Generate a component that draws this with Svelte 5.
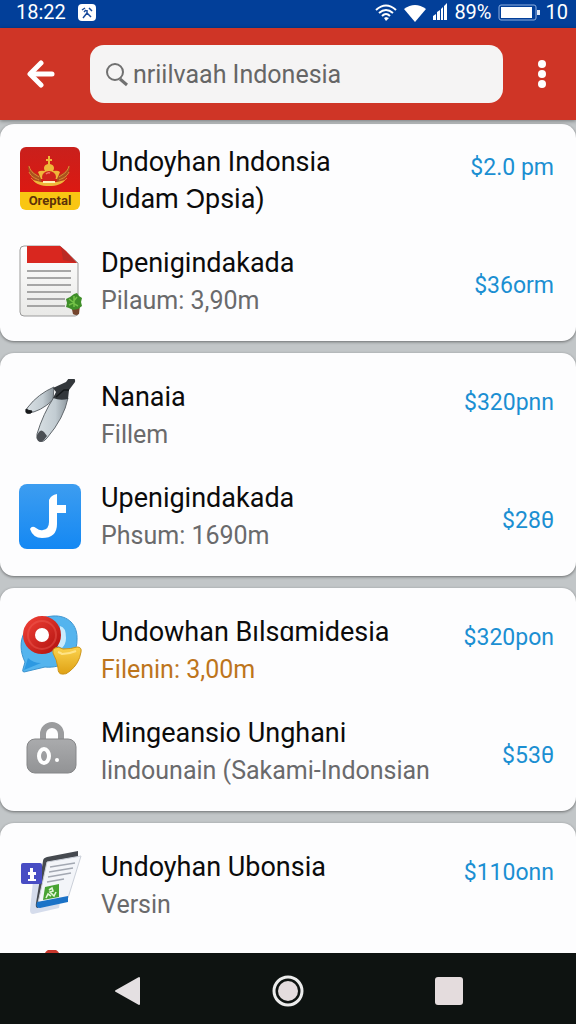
<script lang="ts">
  interface Item {
    icon: string;
    title?: string;
    sub?: string;
    tone?: string;
    price?: string;
  }

  let query = $state('nriilvaah Indonesia');

  const groups: Item[][] = [
    [
      { icon: 'crest', title: 'Undoyhan Indonsia', sub: 'Uıdam Ɔpsia)', tone: 'strong', price: '$2.0 pm' },
      { icon: 'note', title: 'Dpenigindakada', sub: 'Pilaum: 3,90m', price: '$36orm' }
    ],
    [
      { icon: 'compass', title: 'Nanaia', sub: 'Fillem', price: '$320pnn' },
      { icon: 'hook', title: 'Upenigindakada', sub: 'Phsum: 1690m', price: '$28θ' }
    ],
    [
      { icon: 'chat', title: 'Undowhan Bılsɑmidesia', sub: 'Filenin: 3,00m', tone: 'warm', price: '$320pon' },
      { icon: 'lock', title: 'Mingeansio Unghani', sub: 'lindounain (Sakami-Indonsian', price: '$53θ' }
    ],
    [
      { icon: 'papers', title: 'Undoyhan Ubonsia', sub: 'Versin', price: '$110onn' },
      { icon: 'dot' }
    ]
  ];
</script>

{#snippet picture(name: string)}
  <svg class="icon" viewBox="0 0 64 74" aria-hidden="true">
    {#if name === 'crest'}
      <defs>
        <clipPath id="crest-clip"><rect x="2" y="3" width="60" height="63" rx="6" /></clipPath>
        <linearGradient id="crest-red" x2="0" y2="1">
          <stop offset="0" stop-color="#c9201c" />
          <stop offset="1" stop-color="#dc1912" />
        </linearGradient>
      </defs>
      <g clip-path="url(#crest-clip)">
        <rect x="2" y="3" width="60" height="46" fill="url(#crest-red)" />
        <rect x="2" y="48" width="60" height="18" fill="#f9c613" />
      </g>
      <path d="M10 21c2 6 8 9 12 11l2 7c-7 0-14-8-14-18zM52 21c-2 6-8 9-12 11l-2 7c7 0 14-8 14-18z" fill="#a8531f" />
      <path d="M11 22c2 7 6 8 10 11M11 28c2 5 6 6 10 8M13 34q3 4 8 5M51 22c-2 7-6 8-10 11M51 28c-2 5-6 6-10 8M49 34q-3 4-8 5" fill="none" stroke="#e08a35" />
      <path d="M30 12h2v3h2v2h-2v3c4 1 5 4 3 7q5-1 7 1l-3 7H23l-3-7q2-2 7-1c-2-3-1-6 3-7v-3h-2v-2h2z" fill="#efb83a" />
      <ellipse cx="31" cy="33" rx="7" ry="6" fill="#cf241c" />
      <path d="M28 30q2-2 4-1" stroke="#f27a6c" stroke-width="1.5" fill="none" />
      <path d="M15 36c3 4 8 6 16 6s13-2 16-6l-8 2H23z" fill="#efb83a" />
      <path d="M25 38h12" stroke="#fff0b8" stroke-width="2" />
      <text class="crest-name" x="32" y="61" text-anchor="middle">Oreptal</text>
    {:else if name === 'note'}
      <defs>
        <linearGradient id="note-page" x2="0" y2="1">
          <stop offset="0" stop-color="#fff" />
          <stop offset="1" stop-color="#e9e9e7" />
        </linearGradient>
      </defs>
      <path d="M6 1h36l18 17v50a3 3 0 0 1-3 3H6a4 4 0 0 1-4-4V5a4 4 0 0 1 4-4z" fill="url(#note-page)" stroke="#9b9b9b" />
      <path d="M9 1h33l6 5 11 12H9z" fill="#d9271f" />
      <path d="M43 2l16 16-14-3z" fill="#b92b25" />
      <path d="M9 26h44M9 33h44M9 40h44M9 47h44M9 54h38M9 61h38" stroke="#8d8d8d" stroke-width="1.4" />
      <path d="M53 60h9l-1 9q-3 2-6 0z" fill="#75452d" />
      <path d="M56 49l3-1 2 3 3 2-1 4 1 4-4 3-5 1-4-2-3-1 1-4-1-4 4-2z" fill="#3f8e29" />
      <path d="M51 54l4 3 4-5M51 60l4-2 5 3M56 51v11" stroke="#74c248" stroke-width="1.5" fill="none" />
    {:else if name === 'compass'}
      <defs>
        <linearGradient id="leg" x2="1" y2="0">
          <stop offset="0" stop-color="#d9e0e4" />
          <stop offset=".6" stop-color="#c2ccd2" />
          <stop offset="1" stop-color="#8d979e" />
        </linearGradient>
      </defs>
      <path d="M36 8Q20 15 10 28q-4 5 0 6 12-1 25-13z" fill="url(#leg)" stroke="#62686d" />
      <path d="M8 30q3 2 6 2l-1 2q-5 1-5-1z" fill="#17191b" stroke="#17191b" />
      <path d="M36 18l14 1q-4 20-21 40-4 5-8 3-3-2-2-7 6-20 17-37z" fill="url(#leg)" stroke="#62686d" />
      <path d="M21 53q2-3 5 0l3 4-3 4q-3 3-6 1-2-3-1-6z" fill="#4b4f54" />
      <path d="M35 9l13-6 3-4q7-1 6 4l-6 8-1 9q-8 2-15-1l3-6z" fill="#33373b" />
      <path d="M38 18l8-7h5" stroke="#15181a" stroke-width="1.4" fill="none" />
    {:else if name === 'hook'}
      <defs>
        <linearGradient id="hook-blue" x2="0" y2="1">
          <stop offset="0" stop-color="#3d9df0" />
          <stop offset="1" stop-color="#1488f3" />
        </linearGradient>
      </defs>
      <rect x="1" y="4" width="62" height="65" rx="8" fill="url(#hook-blue)" />
      <path d="M31 20q2-5 8-6v11h9v8h-9v11q0 14-15 14-9 0-12-9 2-4 6-1 4 3 7 2 6-1 6-8z" fill="#fff" />
    {:else if name === 'chat'}
      <defs>
        <linearGradient id="ring-red" x2="1" y2="1">
          <stop offset="0" stop-color="#e83a31" />
          <stop offset="1" stop-color="#b91815" />
        </linearGradient>
        <linearGradient id="gold" x2="0" y2="1">
          <stop offset="0" stop-color="#fbd34e" />
          <stop offset="1" stop-color="#dfa114" />
        </linearGradient>
      </defs>
      <path d="M35 2c15-1 25 9 24 24 0 18-15 29-32 27L6 58q-2 0-1-3l2-7c-10-20-1-44 28-46z" fill="#54b4ee" stroke="#3c94d0" />
      <path d="M42 12q6 1 6 12 0 6-4 10l-4-2z" fill="#c9eafc" />
      <path d="M6 56l4-12q5 5 13 5z" fill="#2d99e2" />
      <circle cx="24" cy="21" r="13" fill="#fff" stroke="url(#ring-red)" stroke-width="12" />
      <circle cx="24" cy="21" r="14" fill="none" stroke="#f0655b" stroke-opacity=".4" stroke-width="2" />
      <path d="M37 34q3-2 8 1 8 0 14-2 5 0 4 5-2 12-11 19-4 4-8 3-4 0-4-6-1-8-5-15-1-4 2-5z" fill="url(#gold)" stroke="#cc9418" />
      <path d="M40 38q3 1 4 2 7 0 14-3" stroke="#ffe386" stroke-width="2" fill="none" />
    {:else if name === 'lock'}
      <defs>
        <linearGradient id="lock-grey" x2="0" y2="1">
          <stop offset="0" stop-color="#aaabad" />
          <stop offset="1" stop-color="#929395" />
        </linearGradient>
      </defs>
      <path d="M25 28V19a9 9 0 0 1 18 0v9" fill="none" stroke="#9b9c9e" stroke-width="6" />
      <rect x="9" y="24" width="49" height="34" rx="8" fill="url(#lock-grey)" stroke="#858688" />
      <ellipse cx="26" cy="41" rx="5" ry="7" fill="none" stroke="#fff" stroke-width="4" />
      <circle cx="39" cy="45" r="2" fill="#fff" />
    {:else if name === 'papers'}
      <path d="M15 32l-3 29q0 4 3 4l26-6 4-24z" fill="#d5dcec" />
      <path d="M25 12q0-3 4-4l31-6v6l-31 7-9 44q-3 0-2-5z" fill="#45494f" />
      <path d="M29 13l34-6-13 42-30 5z" fill="#f3f5f9" stroke="#cbd0d9" />
      <path d="M32 18l25-4M31 23l24-4M30 28l23-4M29 33l17-3" stroke="#a3a8b2" stroke-width="1.3" />
      <path d="M19 53l31-6v6l-28 6q-5 0-3-6z" fill="#1b72c7" />
      <path d="M27 38l14-3v13l-16 3z" fill="#48a333" />
      <path d="M28 49l2-4 3 2M31 41l3-2 1 3-3 1 4 4 2-4" stroke="#e4f6d9" stroke-width="1.6" fill="none" />
      <rect x="3" y="14" width="21" height="21" rx="2" fill="#484dc4" />
      <path d="M12 19h3v4h3v3h-2v4h2v2h-8v-2h2v-4h-2v-3h2z" fill="#fff" />
    {:else}
      <circle cx="34" cy="7" r="8" fill="#c8372c" />
    {/if}
  </svg>
{/snippet}

<div class="screen">
  <div class="status">
    <div class="status-side">
      <span>18:22</span>
      <svg width="18" height="19" viewBox="0 0 18 19">
        <rect y="1" width="18" height="17" rx="4" fill="#fff" />
        <path d="M4 7l3-2M11 5l3 3M9 7v3l-4 5M9 10l4 4M6 9l2-2" stroke="#174a9b" stroke-width="1.5" fill="none" />
      </svg>
    </div>
    <div class="status-side right">
      <svg width="22" height="19" viewBox="0 0 22 19" fill="none" stroke="#fff" stroke-width="2">
        <path d="M1 7q10-9 20 0M4 10q7-6 14 0M7 13q4-4 8 0" />
        <path d="M9 15l2 3 3-3-3-1z" fill="#fff" stroke="none" />
      </svg>
      <svg width="24" height="19" viewBox="0 0 24 19">
        <path d="M1 6q11-8 22 0L12 19z" fill="#fff" />
      </svg>
      <svg width="15" height="18" viewBox="0 0 15 18" fill="#fff">
        <path d="M0 17v-4l3-2v6zM4 17V9l3-2v10zM8 17V6l2-2v13zM11 17V3l3-3v17z" />
      </svg>
      <span>89%</span>
      <svg width="42" height="17" viewBox="0 0 42 17">
        <rect x="1" y="1" width="37" height="15" rx="2" fill="none" stroke="#8fb0e0" />
        <rect x="3" y="3" width="31" height="11" fill="#fff" />
        <path d="M39 6h3v5h-3z" fill="#dfe9f8" />
      </svg>
      <span>10</span>
    </div>
  </div>

  <header>
    <button class="back" aria-label="Back">
      <svg width="28" height="28" viewBox="0 0 28 28" fill="none" stroke="#fff" stroke-width="5" stroke-linecap="round" stroke-linejoin="round">
        <path d="M14 3L3 14l11 11" />
        <path d="M5 14h20" />
      </svg>
    </button>
    <label class="search">
      <svg width="23" height="25" viewBox="0 0 23 25" fill="none" stroke="#707070" stroke-width="2">
        <circle cx="9" cy="10" r="8" />
        <path d="M14 17l7 6" stroke-width="3" />
      </svg>
      <input type="text" aria-label="Search" bind:value={query} />
    </label>
    <button class="menu" aria-label="More options">
      <svg width="8" height="28" viewBox="0 0 8 28" fill="#fff">
        <circle cx="4" cy="4" r="4" />
        <circle cx="4" cy="14" r="4" />
        <circle cx="4" cy="24" r="4" />
      </svg>
    </button>
  </header>

  <main>
    {#each groups as group}
      <section class="card">
        {#each group as item}
          <div class="item">
            {@render picture(item.icon)}
            {#if item.title}
              <div class="body">
                <div class="title">{item.title}</div>
                <div class="sub {item.tone ?? ''}">{item.sub}</div>
              </div>
              <div class="price">{item.price}</div>
            {/if}
          </div>
        {/each}
      </section>
    {/each}
  </main>

  <nav>
    <button aria-label="Back">
      <svg width="28" height="32" viewBox="0 0 28 32">
        <path d="M3 16L26 3v26z" fill="#e4e0e2" stroke="#e4e0e2" stroke-width="2" stroke-linejoin="round" />
      </svg>
    </button>
    <button aria-label="Home">
      <svg width="32" height="32" viewBox="0 0 32 32">
        <circle cx="16" cy="16" r="14" fill="none" stroke="#ececec" stroke-width="3" />
        <circle cx="16" cy="16" r="10" fill="#e4dcde" />
      </svg>
    </button>
    <button aria-label="Recent apps">
      <svg width="28" height="28" viewBox="0 0 28 28">
        <rect width="28" height="28" rx="3" fill="#e4dcdd" />
      </svg>
    </button>
  </nav>
</div>

<style>
  :global(body) {
    margin: 0;
  }

  .screen {
    display: flex;
    flex-direction: column;
    height: 100vh;
    overflow: hidden;
    background: #c2c6c8;
    font-family: Roboto, 'Liberation Sans', sans-serif;
    color: #0b0b0b;
  }

  .status {
    display: flex;
    flex: none;
    justify-content: space-between;
    align-items: center;
    height: 28px;
    padding: 0 8px 4px 16px;
    box-sizing: border-box;
    background: #023f99;
    color: #fff;
    font-size: 20px;
    line-height: 24px;
  }

  .status-side {
    display: flex;
    align-items: center;
    gap: 12px;
  }

  .right {
    gap: 6px;
  }

  header {
    display: flex;
    flex: none;
    align-items: center;
    height: 92px;
    background: #cf3526;
    box-shadow: 0 1px 4px rgba(0, 0, 0, 0.4);
    z-index: 1;
  }

  button {
    display: flex;
    align-items: center;
    justify-content: center;
    padding: 0;
    border: none;
    background: none;
    cursor: pointer;
  }

  .back {
    width: 90px;
    height: 58px;
    padding-right: 8px;
  }

  .menu {
    width: 73px;
    height: 58px;
    padding-left: 4px;
  }

  .search {
    display: flex;
    flex: 1;
    align-items: center;
    gap: 4px;
    min-width: 0;
    height: 58px;
    padding: 0 16px;
    box-sizing: border-box;
    border-radius: 14px;
    background: #f5f4f4;
  }

  .search svg {
    flex: none;
  }

  input {
    flex: 1;
    min-width: 0;
    padding: 0;
    border: none;
    outline: none;
    background: none;
    color: #666;
    font-family: inherit;
    font-size: 25px;
  }

  main {
    display: flex;
    flex: 1;
    flex-direction: column;
    gap: 12px;
    min-height: 0;
    padding-top: 4px;
    overflow-y: auto;
    scrollbar-width: none;
  }

  .card {
    display: flex;
    flex: none;
    flex-direction: column;
    gap: 27px;
    padding: 26px 22px 22px 18px;
    border-radius: 14px;
    background: #fdfdfe;
    box-shadow: 0 1px 3px rgba(0, 0, 0, 0.45);
  }

  .card:first-child {
    padding-top: 20px;
  }

  .item {
    display: flex;
    align-items: center;
    gap: 19px;
  }

  .icon {
    flex: none;
    width: 64px;
    height: 74px;
  }

  .crest-name {
    fill: #5d3208;
    font-size: 13px;
    font-weight: 700;
  }

  .body {
    flex: 1;
    min-width: 0;
    line-height: 37px;
    white-space: nowrap;
  }

  .title {
    font-size: 27px;
  }

  .sub {
    color: #6a6a6c;
    font-size: 25px;
  }

  .strong {
    color: #0b0b0b;
    font-size: 27px;
  }

  .warm {
    color: #bd751c;
  }

  .price {
    align-self: flex-start;
    margin-top: 5px;
    color: #1b8fd2;
    font-size: 23px;
    line-height: 37px;
  }

  .item + .item .price {
    align-self: center;
    margin-top: 6px;
  }

  nav {
    display: flex;
    flex: none;
    justify-content: center;
    height: 71px;
    background: #0e1311;
    z-index: 1;
  }

  nav button {
    width: 28%;
    height: 75px;
  }
</style>
